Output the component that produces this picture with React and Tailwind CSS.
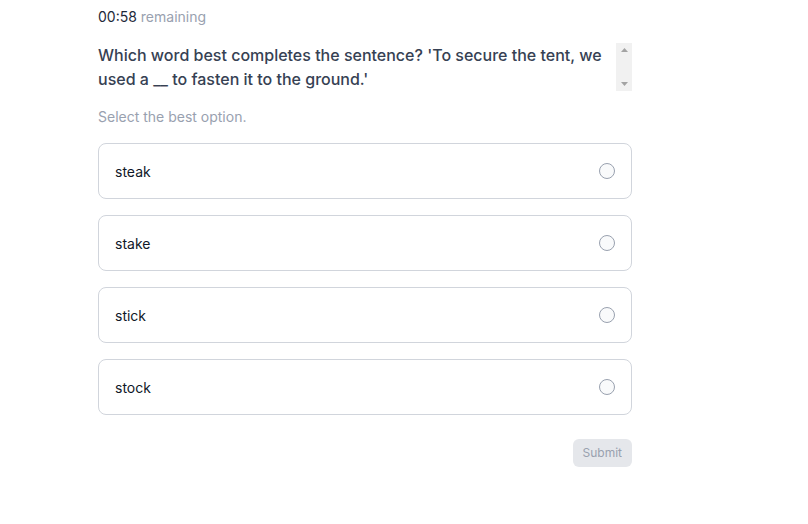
const OPTIONS = ["steak", "stake", "stick", "stock"];

export default function App() {
  return (
    <div className="min-h-screen bg-white" style={{ fontFamily: "Inter, 'Noto Sans', sans-serif" }}>
      <div className="ml-[98px] w-[534px] pt-[7px]">
        <p className="text-sm leading-5 text-gray-800">
          00:58 <span className="text-gray-400">remaining</span>
        </p>
        <div className="mt-4 flex h-12">
          <p className="flex-1 text-base leading-6 font-medium text-gray-700">
            Which word best completes the sentence? 'To secure the tent, we used a __ to fasten it to the ground.'
          </p>
          {/* scrollbar track */}
          <div className="flex w-[16px] flex-col items-center justify-between bg-[#f1f1f1] py-[5px]">
            <svg width="7" height="4" viewBox="0 0 7 4"><path d="M3.5 0L7 4H0z" fill="#a3a3a3" /></svg>
            <svg width="7" height="4" viewBox="0 0 7 4"><path d="M0 0h7L3.5 4z" fill="#a3a3a3" /></svg>
          </div>
        </div>
        <p className="mt-4 text-sm leading-5 text-gray-400">Select the best option.</p>
        <div className="mt-4 flex flex-col gap-4">
          {OPTIONS.map((o) => (
            <label
              key={o}
              className="flex h-14 cursor-pointer items-center justify-between rounded-lg border border-gray-300 px-4 text-sm text-gray-900"
            >
              <span className="pt-px">{o}</span>
              <span className="h-4 w-4 rounded-full border border-gray-400 bg-gray-50" />
            </label>
          ))}
        </div>
        <div className="mt-6 flex justify-end">
          <button className="h-7 rounded-md bg-gray-200 px-2.5 text-xs text-gray-400">Submit</button>
        </div>
      </div>
    </div>
  );
}
